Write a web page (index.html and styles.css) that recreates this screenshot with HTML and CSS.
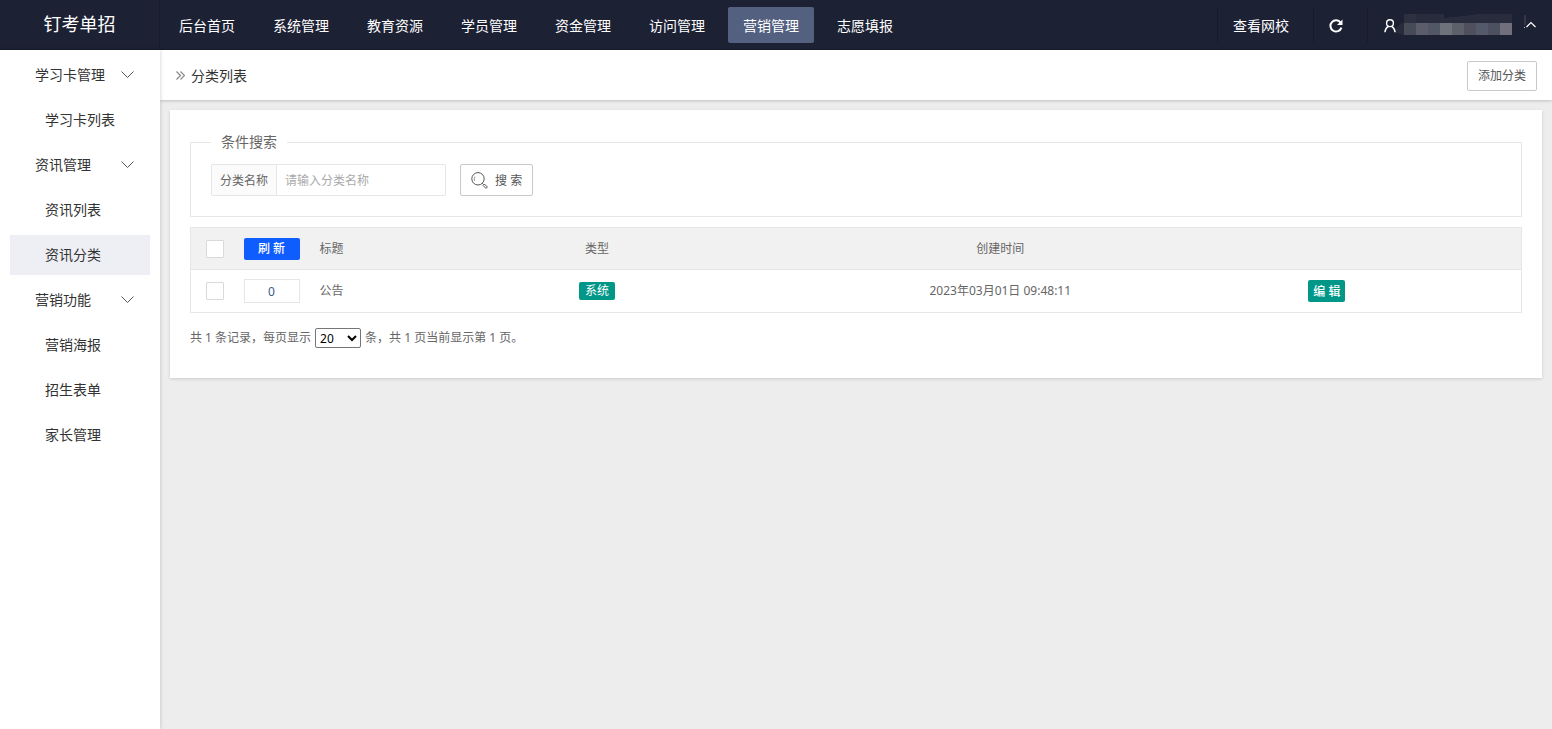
FILE: index.html
```
<!DOCTYPE html>
<html lang="zh-CN">
<head>
<meta charset="utf-8">
<title>分类列表</title>
<link rel="stylesheet" href="styles.css">
</head>
<body>
<header class="topbar">
  <div class="brand">钉考单招</div>
  <nav class="mainnav">
    <a href="#">后台首页</a>
    <a href="#">系统管理</a>
    <a href="#">教育资源</a>
    <a href="#">学员管理</a>
    <a href="#">资金管理</a>
    <a href="#">访问管理</a>
    <a href="#" class="current">营销管理</a>
    <a href="#">志愿填报</a>
  </nav>
  <div class="tools">
    <a href="#" class="tool">查看网校</a>
    <button type="button" class="tool" aria-label="刷新页面">
      <svg width="14" height="14" viewBox="0 0 14 14" fill="none" stroke="#fff" stroke-width="2"><path d="M11.6 3.6A5.6 5.6 0 1 0 12.4 8.6"/><path d="M13.5 0.5V6H8z" fill="#fff" stroke="none"/></svg>
    </button>
    <button type="button" class="tool user" aria-label="用户菜单">
      <svg width="12" height="14" viewBox="0 0 12 14" fill="none" stroke="#fff" stroke-width="1.4"><circle cx="6" cy="4.2" r="3.4"/><path d="M0.9 13.2C1.2 10 2.6 8.3 4.4 7.3M11.1 13.2C10.8 10 9.4 8.3 7.6 7.3"/></svg>
      <svg class="mask" width="116" height="22" viewBox="0 0 116 22" shape-rendering="crispEdges">
        <path d="M0 14L6 9H8V21L0 19z" fill="#282b3a"/>
        <path d="M8 0H48V4L68 2L83 0H116V9H8z" fill="#292c3c"/>
        <path d="M8 0H20V9H8z" fill="#2d303f"/>
        <path d="M8 9h12v12H8z" fill="#474a57"/><path d="M20 9h12v12H20z" fill="#5b5e6a"/>
        <path d="M32 9h12v12H32z" fill="#525766"/><path d="M44 9h12v12H44z" fill="#6e727b"/>
        <path d="M56 9h12v12H56z" fill="#5b606b"/><path d="M68 9h12v12H68z" fill="#504f5e"/>
        <path d="M80 9h12v12H80z" fill="#545a69"/><path d="M92 9h12v12H92z" fill="#4d505f"/>
        <path d="M104 9h12v12h-12z" fill="#706f7b"/>
      </svg>
      <svg class="caret" width="14" height="14" viewBox="0 0 14 14" fill="none"><path d="M1 0h2v10H1z" fill="#333646"/><path d="M1 12h1v1H1z" fill="#ccc"/><path d="M3.5 12L8 7.5L12.5 12" stroke="#fff" stroke-width="1.2"/></svg>
    </button>
  </div>
</header>
<div class="shell">
  <aside class="side">
    <a href="#" class="group">学习卡管理<svg width="13" height="8" viewBox="0 0 13 8"><path d="M0.5 0.5L6.5 6.5L12.5 0.5"/></svg></a>
    <a href="#" class="leaf">学习卡列表</a>
    <a href="#" class="group">资讯管理<svg width="13" height="8" viewBox="0 0 13 8"><path d="M0.5 0.5L6.5 6.5L12.5 0.5"/></svg></a>
    <a href="#" class="leaf">资讯列表</a>
    <a href="#" class="leaf current">资讯分类</a>
    <a href="#" class="group">营销功能<svg width="13" height="8" viewBox="0 0 13 8"><path d="M0.5 0.5L6.5 6.5L12.5 0.5"/></svg></a>
    <a href="#" class="leaf">营销海报</a>
    <a href="#" class="leaf">招生表单</a>
    <a href="#" class="leaf">家长管理</a>
  </aside>
  <main class="main">
    <div class="titlebar">
      <svg width="9" height="9" viewBox="0 0 9 9" fill="none" stroke="#888" stroke-width="1.2"><path d="M0.5 0.5L4.5 4.5L0.5 8.5M4.5 0.5L8.5 4.5L4.5 8.5"/></svg>
      <h1>分类列表</h1>
      <button type="button" class="btn add">添加分类</button>
    </div>
    <section class="panel">
      <fieldset class="search">
        <legend>条件搜索</legend>
        <form class="searchrow">
          <div class="field">
            <label for="name">分类名称</label>
            <input id="name" type="text" placeholder="请输入分类名称">
          </div>
          <button type="button" class="btn find">
            <svg width="17" height="17" viewBox="0 0 17 17" fill="none" stroke="#555"><circle cx="7" cy="6.8" r="6.2"/><path d="M4 4.5Q2.8 6.5 3.6 9" stroke="#999"/><path d="M11.2 11.2L12.6 12.6"/><path d="M12 13.4L13.4 12L16.4 15L15 16.4z"/></svg>
            <span>搜 索</span>
          </button>
        </form>
      </fieldset>
      <table class="grid">
        <colgroup><col class="c-check"><col class="c-sort"><col class="c-title"><col class="c-type"><col class="c-time"><col></colgroup>
        <thead>
          <tr>
            <th class="mid"><input type="checkbox" aria-label="全选"></th>
            <th class="mid"><button type="button" class="refresh">刷 新</button></th>
            <th>标题</th><th class="mid">类型</th><th class="mid">创建时间</th><th></th>
          </tr>
        </thead>
        <tbody>
          <tr>
            <td class="mid"><input type="checkbox" aria-label="选择公告"></td>
            <td class="mid"><input type="text" class="sort" value="0" aria-label="排序"></td>
            <td>公告</td>
            <td class="mid"><span class="badge">系统</span></td>
            <td class="mid">2023年03月01日 09:48:11</td>
            <td><button type="button" class="edit">编 辑</button></td>
          </tr>
        </tbody>
      </table>
      <div class="pager">
        <label for="size">共 1 条记录，每页显示</label>
        <select id="size"><option>20</option><option>50</option><option>100</option></select>
        <span>条，共 1 页当前显示第 1 页。</span>
      </div>
    </section>
  </main>
</div>
</body>
</html>
```
FILE: styles.css
```
* { box-sizing: border-box; }
body {
  margin: 0;
  min-height: 100vh;
  display: flex;
  flex-direction: column;
  background: #ededed;
  color: #666;
  font: 12px/20px "Noto Sans", "Noto Sans CJK SC", sans-serif;
}
a { color: inherit; text-decoration: none; }
button, input, select { font: inherit; color: inherit; margin: 0; }
svg { display: block; flex: none; }

.topbar {
  display: flex;
  align-items: center;
  height: 50px;
  background: #1d2134;
  border-bottom: 1px solid #191b2b;
  color: #fff;
}
.brand {
  width: 160px;
  line-height: 49px;
  font-size: 18px;
  text-align: center;
  border-right: 1px solid #191c2d;
}
.mainnav { display: flex; gap: 8px; padding-left: 4px; font-size: 14px; }
.mainnav a { padding: 2px 15px 0; line-height: 34px; border-radius: 2px; }
.mainnav .current { background: #536080; }
.tools { display: flex; gap: 9px; margin-left: auto; }
.tool {
  display: flex;
  align-items: center;
  height: 34px;
  padding: 2px 15px 0;
  border: 0;
  border-left: 1px solid #171a29;
  background: none;
  font-size: 14px;
}
.user { padding: 2px 15px 0 16px; }
.mask { margin-bottom: 1px; }
.caret { margin-left: 11px; margin-bottom: 8px; }

.shell { display: flex; flex: 1; }
.side {
  display: flex;
  flex-direction: column;
  gap: 5px;
  width: 160px;
  padding: 5px 10px;
  background: #fff;
  color: #333;
  font-size: 14px;
  line-height: 40px;
  box-shadow: 0 0 4px rgba(0, 0, 0, .2);
  z-index: 1;
}
.group {
  display: flex;
  align-items: center;
  justify-content: space-between;
  padding: 0 16px 0 25px;
}
.group svg { fill: none; stroke: #555; }
.leaf { padding-left: 35px; }
.leaf.current { background: #eeeff4; }

.main { flex: 1; min-width: 0; }
.titlebar {
  display: flex;
  align-items: center;
  height: 50px;
  padding: 1px 15px 0 16px;
  background: #fff;
  box-shadow: 0 1px 3px rgba(0, 0, 0, .2);
}
.titlebar h1 {
  margin: 0 auto 0 6px;
  color: #333;
  font-size: 14px;
  font-weight: 400;
  line-height: 20px;
}
.btn {
  background: #fff;
  border: 1px solid #c9c9c9;
  border-radius: 2px;
  color: #555;
}
.add { height: 30px; padding: 1px 10px 0; }

.panel {
  margin: 10px;
  padding: 22px 20px 30px;
  background: #fff;
  box-shadow: 0 1px 3px rgba(0, 0, 0, .15);
}
.search {
  margin: 0 0 10px;
  padding: 12px 20px 20px;
  border: 1px solid #e6e6e6;
}
.search legend { padding: 0 10px; font-size: 14px; }
.searchrow { display: flex; gap: 14px; }
.field { display: flex; height: 32px; line-height: 30px; }
.field label {
  padding: 1px 8px 0;
  border: 1px solid #e6e6e6;
  border-right: 0;
  border-radius: 2px 0 0 2px;
  background: #fbfbfb;
}
.field input {
  width: 170px;
  padding: 1px 8px 0;
  border: 1px solid #e6e6e6;
  border-radius: 0 2px 2px 0;
}
.field input::placeholder { color: #aaa; }
.find { display: flex; align-items: center; gap: 7px; height: 32px; padding: 1px 10px 0; }

.grid {
  width: 100%;
  table-layout: fixed;
  border-collapse: collapse;
  border: 1px solid #e6e6e6;
}
.grid tr { height: 43px; border-bottom: 1px solid #e6e6e6; }
.grid thead { background: #f1f1f1; }
.grid thead tr { height: 42px; }
.grid th, .grid td { padding: 0 10px; font-weight: 400; text-align: left; }
.grid .mid { text-align: center; }
.c-check { width: 43px; }
.c-sort { width: 76px; }
.c-title { width: 13.7%; }
.c-type { width: 15.8%; }
.c-time { width: 44.8%; }
.grid input[type="checkbox"] {
  appearance: none;
  display: block;
  width: 18px;
  height: 18px;
  margin-left: 5px;
  border: 1px solid #d9d9d9;
  border-radius: 1px;
  background: #fff;
}
.refresh, .edit { display: block; height: 22px; padding: 1px 0 0; border: 0; border-radius: 2px; color: #fff; }
.refresh { width: 56px; background: #0f5cff; font-weight: 500; }
.edit { width: 37px; background: #009688; font-weight: 500; }
.sort { display: block; width: 56px; height: 24px; padding: 0; border: 1px solid #e6e6e6; color: #3a5a85; text-align: center; }
.badge {
  display: inline-block;
  padding: 0 6px;
  border-radius: 2px;
  background: #009688;
  color: #fff;
  line-height: 18px;
}
.pager { display: flex; align-items: center; gap: 4px; margin-top: 15px; }
.pager select {
  width: 46px;
  height: 20px;
  padding: 0;
  border: 1px solid #767676;
  border-radius: 2px;
  background: #fff;
  color: #000;
}
```
